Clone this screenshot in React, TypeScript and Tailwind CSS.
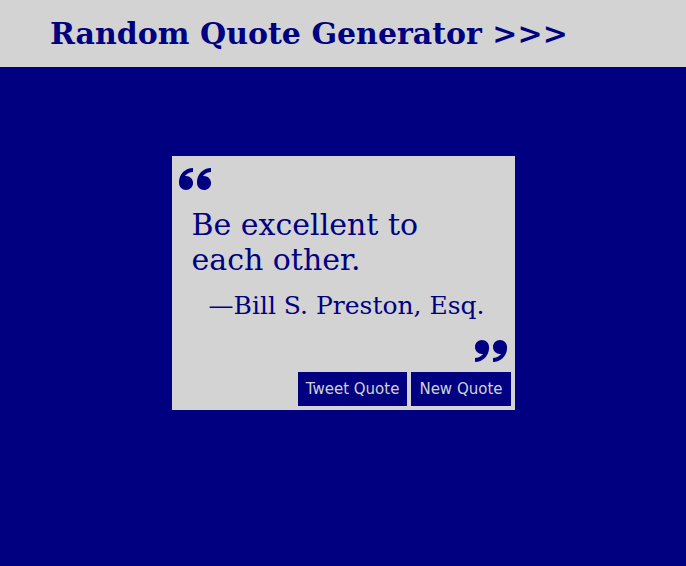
import { ImQuotesLeft, ImQuotesRight } from "react-icons/im";

export default function App() {
  return (
    <div className="min-h-screen w-full bg-[#000080] font-['DejaVu_Serif',serif] text-[#000080]">
      <header className="h-[67px] bg-[#d3d3d3] pl-[50px] flex items-center">
        <h1 className="text-[30px] font-bold leading-none">Random Quote Generator &gt;&gt;&gt;</h1>
      </header>

      <div className="mx-auto mt-[89px] w-1/2 bg-[#d3d3d3] px-[4px] pt-[6px] pb-[4px]">
        <ImQuotesLeft size={32} className="ml-[3px]" />
        <p className="mt-[13px] pl-[16px] pr-[60px] text-[30px] leading-[35px]">
          Be excellent to each other.
        </p>
        <p className="mt-[14px] pr-[26px] text-right text-[25px] leading-[30px]">
          —Bill S. Preston, Esq.
        </p>
        <div className="mt-[13px] flex justify-end pr-[4px]">
          <ImQuotesRight size={32} />
        </div>
        <div className="mt-[6px] flex justify-end gap-[4px]">
          <button className="h-[34px] bg-[#000080] px-[8px] font-['DejaVu_Sans',sans-serif] text-[15px] text-[#d3d3d3]">
            Tweet Quote
          </button>
          <button className="h-[34px] bg-[#000080] px-[8px] font-['DejaVu_Sans',sans-serif] text-[15px] text-[#d3d3d3]">
            New Quote
          </button>
        </div>
      </div>
    </div>
  );
}
